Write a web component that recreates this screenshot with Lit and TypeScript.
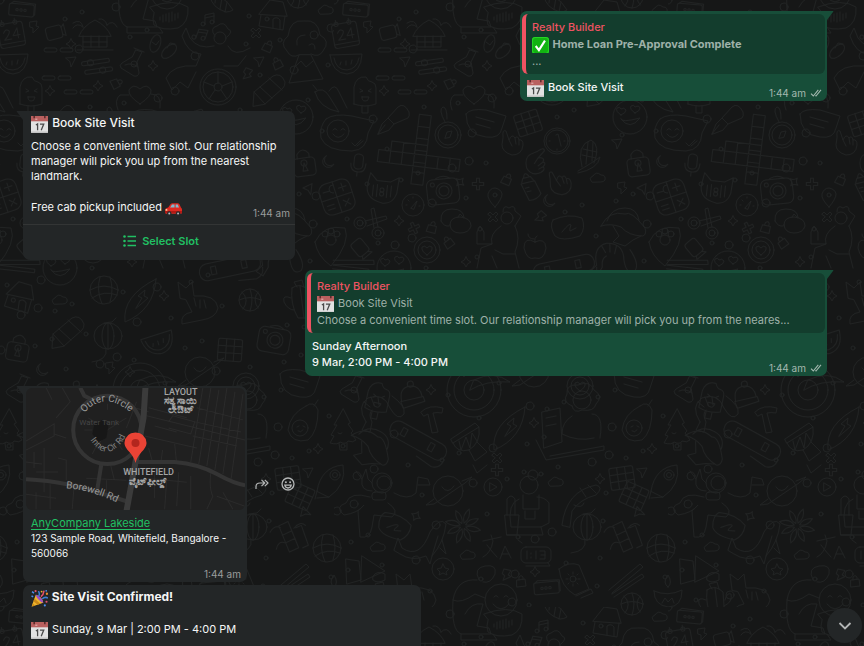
import { LitElement, html, svg, css } from "lit";
import { customElement, property } from "lit/decorators.js";

/* ---------- wallpaper doodles: each is drawn around its own origin ---------- */
const doodles: Record<string, unknown> = {
  star: svg`<path d="M0-5Q1-1 5 0Q1 1 0 5Q-1 1-5 0Q-1-1 0-5Z"/>`,
  cross: svg`<path d="M-5-3-3-5 0-2 3-5 5-3 2 0 5 3 3 5 0 2-3 5-5 3-2 0Z"/>`,
  pills: svg`<rect x="-14" y="-2" width="13" height="4" rx="2"/><rect x="2" y="-2" width="13" height="4" rx="2"/>`,
  plane: svg`<path d="M-5-4 5-5 0 5-1 0Z"/>`,
  bolt: svg`<path d="M-4-5 3-6 2-1 5 0-1 6-1 1-4 0Z"/>`,
  bag: svg`<path d="M-4-1 4-2 5 5-4 6ZM-2-1V-4Q0-7 2-4V-2"/>`,
  moon: svg`<path d="M-2-6A6 6 0 1 0 6 2 5 5 0 0 1-2-6Z"/>`,
  cloud: svg`<path d="M-6 4Q-10 0-5-2-2-7 3-3 8-3 7 2 6 4 3 4Z"/>`,
  radio: svg`<rect x="-12" y="-6" width="25" height="12" rx="2"/><circle cx="-4" r="1.2"/><circle r="1.2"/><circle cx="4" r="1.2"/><path d="M-10-6-8-8 14-7V4"/>`,
  calendar: svg`<rect x="-12" y="-12" width="25" height="24" rx="3"/><path d="M-7-12V-16M6-12V-16M-12 8H13"/><circle cx="-7" cy="-12" r="2"/><circle cx="6" cy="-12" r="2"/><path d="M-7-3Q-4-8-1-4-1-1-7 4H0M7 4V-6L2 1H9"/>`,
  camcorder: svg`<rect x="-9" y="-6" width="16" height="13" rx="3"/><path d="M7-3 10-6V6L7 4"/>`,
  hut: svg`<path d="M-16 0Q-12-10 0-16 12-10 16 0ZM-12 0V11H12V0M-12 6H12M-4 0V11M4 0V11M-18 14H18M12-11Q18-17 22-9M12-11Q10-18 4-17M-12-9Q-18-14-22-8M-12-9Q-14-18-22-13"/>`,
  melon: svg`<path d="M-16-7 16-8Q15 11 1 12-14 11-16-7ZM-12-4Q-10 8 1 8 11 7 13-4M-5 0-6 3M0-1V3M6-2 5 2"/>`,
  sandals: svg`<ellipse cx="-8" rx="5" ry="9" transform="rotate(18)"/><ellipse cx="8" cy="-1" rx="5" ry="9" transform="rotate(48)"/><path d="M-11-4-7-1-4-5M4 2 7-3 12-2"/>`,
  flask: svg`<path d="M2-12 8-10 3 0 5 11Q4 15 0 14L-13 6Q-15 3-12 1L-2-5ZM0-14 10-10M-9 3Q-2 0 4 5"/><circle cx="0" cy="2" r="3"/>`,
  brush: svg`<rect x="-14" y="-6" width="28" height="4" rx="2"/><rect x="-12" y="3" width="28" height="4" rx="2"/><circle cx="-5" cy="-4" r="3"/><circle cx="6" cy="5" r="3"/>`,
  popsicle: svg`<path d="M-11 12V-5Q-9-16 1-15 3-10 7-10 11-9 11-4V12Q0 16-11 12ZM-3 14V21H3V14M-5-3-2-1-5 0M6-3 3-1 6 0M-3 5H4Q3 10 0 9-3 9-3 5Z"/>`,
  heartChat: svg`<path d="M0 8Q-12 0-11-6-7-13 0-7 7-13 11-6 12 0 0 8ZM-11-1H-20Q-26 4-22 14M11-2Q22-2 20 12"/>`,
  wheel: svg`<circle r="18"/><circle r="15"/><circle r="4"/><path d="M0-4V-15M4-1 14-5M3 3 9 12M-3 3-9 12M-4-1-14-5"/>`,
  rider: svg`<circle cx="2" cy="-24" r="6"/><path d="M-3-26Q-9-34-1-36 6-42 10-33 16-31 9-25M-4-16Q-20-12-28-24L-32-34-36-26Q-30-8-17-8L-22 4Q-45 2-52 16L-46 28-38 20-30 26-22 10M10-16Q16-4 32-14M6 4 20 4 28-6"/>`,
  waveChat: svg`<path d="M-20-10Q4-19 18-10 19 6 8 11-8 14-16 8-18 2-16-4ZM-10 0V3M-7-2V5M-4-3V4M-1-4V5M2-5V4M5-3V3M8-4V1"/>`,
  music: svg`<path d="M-3 4V-5L6-7V2M-3-2 6-4"/><circle cx="-5" cy="4" r="2"/><circle cx="4" cy="2" r="2"/>`,
  shell: svg`<path d="M-12-8Q0-12 11 6 8 8 4 8-10 4-12-8ZM-6-9-7-1M0-6-2 5M5-2 3 8"/>`,
  house: svg`<path d="M-14 0-3-14 10-12 14 2ZM-12 1-14 12 10 16 12 2M0 14V5Q4 2 7 6V15"/><circle cx="-6" cy="5" r="2"/>`,
  ball: svg`<circle r="11"/><path d="M-11 0Q0-5 11 0M0-11Q4 0 0 11M-8-8Q0 0-7 9M8-8Q2 0 8 8"/>`,
  volcano: svg`<path d="M-6 2Q-14 6-18-2-26-10-17-17-15-34-1-32 13-34 15-18 26-12 18-2 14 5 6 1M-6 2-16 30 18 26 6 2ZM-10 14-4 8 1 14 8 8M-8-8Q-10-18 0-18M4-8Q10-12 10-4"/>`,
  pencil: svg`<path d="M-16 16-15 2 4-14Q12-18 16-8 16-4 14-2L-4 14ZM-15 2-4 14M-9-3 3 8M0-12 13 0"/>`,
  pepper: svg`<path d="M-12-6Q-4-12 2-2L12 14Q-8 10-12-6ZM-10-8-14-13M2-7Q8-16 12-6L20 10"/>`,
  smileChat: svg`<path d="M-20-14Q-12-20 6-17L28-12 22 0Q21 17 6 18-20 18-25 5-27-6-20-14Z"/><circle cx="-8" cy="-2" r="11"/><path d="M-13-3Q-11-6-9-3M-5-3Q-3-6-1-3M-13 1Q-8 8-2 1M6 10 9 13 15 7M11 13 17 8"/>`,
  lock: svg`<rect x="-11" y="-5" width="22" height="18" rx="4"/><path d="M-6-5V-9Q0-17 6-9V-5M0 0-2 8H3Z"/><circle r="3"/>`,
  pen: svg`<path d="M-16 14-12 4-6-2 0 4-5 10ZM-6-2 4-13Q10-18 15-8 16-4 14-2L0 4M-16 14-9 5"/>`,
  crossword: svg`<path d="M0-36H12V34H0ZM0-24H12M0-12H12M0 0H12M0 12H12M0 22H12M-36 4H46V16H-36ZM-24-6H12M-24-6V16M-12-6V16M24 4V16M36 4V16"/>`,
  compass: svg`<circle r="13"/><circle r="10"/><path d="M-3 3-1-3 4-4 2 2ZM-3-13Q-10-26-5-28-1-28-1-16"/>`,
  chat: svg`<path d="M-20-10Q-16-16 0-14L20-8 16 4Q14 15 0 13-20 11-20-10ZM-10-7 8-2M-10 0 4 4"/>`,
  gift: svg`<rect x="-12" y="-11" width="24" height="22" rx="2"/><path d="M-12-4H12M-12 3H12M-4-11V11M4-11V11"/>`,
  hand: svg`<path d="M-9-6Q-10-14-6-12L-3-3Q0-10 3-5 6-8 7-3 11-4 11 2 10 12 0 12-10 9-10 2ZM-3-3 0 3M3-5 4 1M7-3V2"/>`,
  clock: svg`<circle r="13"/><circle r="11"/><path d="M-1-6 1-7 4 5M-8 0H-7M7 0H8M0 8V9"/>`,
  calc: svg`<rect x="-16" y="-16" width="32" height="32" rx="8"/><path d="M0-16V16M-16 0H16M-12-8H-5M4-8H12M8-12V-4M5 5 11 11M11 5 5 11M-12 6H-5M-12 10H-5"/>`,
  mic: svg`<rect x="-4" y="-9" width="9" height="15" rx="4"/><path d="M-7 1Q-7 9 1 9 8 9 8 0M0 9V13"/>`,
  cat: svg`<path d="M-15-4-13-16-6-9H8L16-14 15 2Q12 13 2 13-16 11-15-4ZM-9-4V7M-5-5V7M5-5V7M9-5V6"/><circle cx="0" cy="0" r="2"/><circle cx="0" cy="4" r="2"/>`,
  gauge: svg`<circle r="11"/><path d="M-2 3 4-4 1 4ZM-7 0H-6M6 1H7M0-7V-8M-5-5 -4-4"/>`,
  camera: svg`<rect x="-16" y="-12" width="32" height="25" rx="6"/><circle r="8" cx="1"/><circle r="5" cx="1"/><circle cx="-10" cy="-7" r="2"/><path d="M-6-13Q2-17 8-12"/>`,
  bottle: svg`<path d="M-8-5H6L9 9Q5 14-4 13ZM-7-6-5-10H3L5-6M-4-10Q-2-18 2-10M-5 0H-1M-4 4H0"/>`,
  pin: svg`<path d="M0 10Q-8 2-7-3-5-9 0-9 6-8 7-3 7 2 0 10Z"/><circle cy="-2" r="2"/>`,
  scissors: svg`<circle cx="-10" cy="0" r="6"/><circle cx="8" cy="10" r="6"/><circle cx="-10" r="3"/><circle cx="8" cy="10" r="3"/><path d="M-5-2 16-7 17-4-3 3M4 5 1-14 4-15 8 4"/>`,
  mushroom: svg`<path d="M-24 4Q-16-12 0-8 6-12 20 6 22 12 18 14 4 14-4 5-14 1-24 4ZM-12 4-6 14-12 20 0 24 8 18 16 14M-18-1Q-14-14 0-14 12-14 14-2"/>`,
  pick: svg`<path d="M-16-4Q-8-22 14-18 20-4 0 20-14 10-16-4Z"/><circle r="5" cy="-6"/><circle r="3" cx="-6" cy="-12"/><circle r="3" cy="-15"/><circle r="3" cx="6" cy="-12"/>`,
  heartRing: svg`<circle r="13"/><circle r="9"/><path d="M0 5Q-6 1-5-3-2-5 0-2 2-5 5-3 6 1 0 5Z"/>`,
  dumpling: svg`<path d="M-15 0Q-16-12-4-12 8-12 8-3M-15 0Q-12 6-7 5M-6 4Q-6-4 4-4 15-3 15 5 13 12 4 12-5 12-6 4ZM2-4 4-7 7-4"/>`,
  walker: svg`<circle cx="0" cy="-26" r="6"/><path d="M-4-32Q-4-40 2-36 8-40 8-33L14-28 8-18M-6-18Q-18-10-15 0H-30V-12L-27-18-23-12V-4M8-18Q14-6 8 8L12 24M-12 6-4 10H8M-15 0-26 4-30 24M-15 12-10 24"/>`,
  apple: svg`<path d="M0-6Q-11-12-11 0-8 13 0 10 9 13 11 0 10-11 0-6ZM0-6Q-1-10 2-12M-1-9Q-7-9-7-14"/>`,
  scribble: svg`<path d="M-15-8Q0-15 14-10 18 0 12 8-6 14-13 8-19-2-15-8ZM-6 4Q2-6 3-3 1 2 2 3L8 0"/>`,
  loveFace: svg`<circle r="17"/><path d="M-9 2Q0 14 10 1-9 6-9 2M-9-2Q-15-6-13-9-10-11-9-8-6-10-4-7-4-4-9-2ZM5-4Q-1-8 1-11 4-13 5-10 9-12 10-9 10-6 5-4Z"/>`,
  corn: svg`<path d="M-6 12Q-12-10 3-15 13-10 6 8M-10 16Q4 8 12 2 10 14-10 18M-5-6 9-3M-6 0 8 3M0-13-2 9M5-13 4 6"/>`,
  tree: svg`<path d="M0-20-9-4H-6L-12 6-9 7-13 14Q-5 16-3 13 3 16 5 12 10 14 13 11L8 4 10 2 5-5 7-6ZM-4 14-3 21H4V14M-5 4Q-3 6-1 4"/>`,
  shrimp: svg`<path d="M-12 12Q-22-4-10-12 6-18 12-2 20 12 26 4 28-4 14-14M-12 12-16 20-8 22-6 12Q-10 4-6 0M-14-8-8-3M-7-13-4-5M0-13 1-5"/>`,
  beanie: svg`<path d="M-11 4Q-12-10-1-10 9-10 10 2M-12 4 11 2 12 7-10 11Z"/><circle cy="-12" r="3"/>`,
  plate: svg`<circle r="27"/><circle r="20"/><circle r="10"/><path d="M-4 0Q12-10 36-8 20-20 0-10Z"/>`,
  hammer: svg`<path d="M-14-4Q-6-12 8-8L7-3Q2-4-2-3L3 16-3 17-7-2-11 0Z"/>`,
  skate: svg`<rect x="-31" y="-9" width="62" height="17" rx="8"/><rect x="-19" y="-5" width="5" height="8"/><rect x="12" y="-5" width="5" height="8"/><path d="M6 14 24 16Q32 14 32 6"/>`,
  drum: svg`<path d="M-16 0 8-16 12-12-14 4ZM-14 4Q-10 14 2 11 14 4 12-12M-8 2-6 11-1-2 3 9 5-6 10 2M2 11 8 22 20 13 10 3M6 26 10 34 20 26"/>`,
  surf: svg`<path d="M16-21Q-18-4-15 22 14 10 16-21ZM-4 8 2-2-2-4 5-10 4-4 8-2 0 5Z"/>`,
  laptopGirl: svg`<circle cx="8" cy="-28" r="9"/><path d="M-2-22Q-12-26-7-34-8-44 4-43 16-48 20-38 30-32 22-24 20-16 8-18 0-14-2-22ZM-2-12Q-12-6-12 6 4 14 20 10M18-14Q30-14 26 10M-32-16-14-20-12 14-30 20ZM-38 12-28 32 30 22V18L-24 28M-28-10-18-12M-28-2-18-4"/>`,
  rocket: svg`<path d="M-14 10Q-10-14 12-16 16 4-2 16ZM-14 10-16 18M-2 16-14 17"/><circle r="5" cx="4" cy="-6"/><circle r="2.5" cx="4" cy="-6"/>`,
  astronaut: svg`<circle cx="2" cy="-24" r="10"/><circle cx="4" cy="-24" r="7"/><path d="M-8-16Q-20-16-18-28L-24-36M-18-28-14-38-12-28-8-24M14-14Q28-6 36-14L38-30 48-28 50-22 38-22M-10-10Q-30-16-34-4-46 0-36 8-22 6-16-2L-22 4-20 30Q-10 32-8 20L-6 8 12 10Q20 4 8-4"/><rect x="-8" y="-15" width="14" height="8" rx="3"/>`,
  planet: svg`<circle r="15"/><path d="M-14 8-22 14-14 13 17-8 24-14 14-10M-6-4Q0 4 6-5"/>`,
  play: svg`<circle r="9"/><path d="M-3-4 4 0-3 4Z"/>`,
  gardener: svg`<circle cy="-22" r="9"/><circle cx="4" cy="-32" r="5"/><path d="M-10-8Q-22-4-18 20H12L20 16V-4Q16-10 8-10M-6-12V2H10V-12M-4 4V12H6V4M-24 8H-10L-12 28H-22ZM-22 8V-8Q-18-14-14-8V8M-22 28H14L12 20"/>`,
  koi: svg`<path d="M-18 24Q-14-10 16-16 24-14 16-6 0-2-8 10L-10 26ZM0-13 6-4M8-16 16-8M-6 4Q2 8 4 2"/>`,
  lantern: svg`<ellipse rx="14" ry="13"/><ellipse rx="6" ry="13"/><path d="M-4-13 4-14 8-18M0-13V13M-2 13Q0 24-16 26"/>`,
  globe: svg`<circle r="14"/><path d="M-14 0Q0-8 14 0M-12 8Q0 0 13 5M-4-13Q-8 0-2 14M6-13Q10 0 6 12"/>`,
  flower: svg`<path d="M0-3Q-5-10 0-18 5-10 0-3ZM3 0Q10-5 18-2 10 5 3 0ZM0 3Q5 10 0 18-5 10 0 3ZM-3 0Q-10 5-18 2-10-5-3 0ZM2-2Q3-10 12-12 10-3 2-2ZM2 2Q10 3 12 12 3 10 2 2ZM-2 2Q-3 10-12 12-10 3-2 2ZM-2-2Q-10-3-12-12-3-10-2-2Z"/>`,
  whale: svg`<path d="M-26 6-22-6-18 4Q0 16 10-12 20-28 26-20 24-2 12 12L10 20 6 12Q-8 18-20 10ZM18-8 12 12M20 4 26 10 22-4"/>`,
  sandwich: svg`<path d="M-19-9-6-7-4 12-18 16ZM-3-12 20 3-4 14ZM8 8Q12 2 20 6V12Q12 16 8 12Z"/>`,
  starRing: svg`<circle r="11"/><path d="M0-5 2-1 6 0 3 3 4 6 0 4-4 6-3 3-6 0-2-1Z"/>`,
  letters: svg`<path d="M-14-8 4-12M-6-14-4-8Q-6 4-14 8M-10-4Q-4 4 0 8M3 10 8-3 14 9M5 5H12"/>`,
  alarm: svg`<rect x="-15" y="-8" width="30" height="16" rx="5"/><path d="M-9-4V4M-5-2V-1M-5 2V3M0-4V4M4-4H9V4H4M5 0H9M-14-12-18-15M12 8 14 11H-10"/>`,
  sunscreen: svg`<path d="M-14-10Q-4-18 6-14L16 10 2 16Q-12 8-14-10ZM3 17 18 10 20 14 8 19"/><circle r="3"/><path d="M0-5V-7M0 5V7M-5 0H-7M5 0H7M-4-4-5-5M4-4 5-5M-4 4-5 5M4 4 5 5"/>`,
  avocado: svg`<path d="M4-18Q12-24 16-14 16 8 6 16-10 20-14 6-12-10 4-18Z"/><circle cx="-2" cy="4" r="8"/><path d="M-5 3-3 2M1 2 3 3M-4 7Q-1 9 1 6M12-18 16-24"/>`,
  fox: svg`<path d="M-16-4-18-20-10-14-4-20-2-6Q20-8 22 6 20 16 6 18L-14 22Q-16 12-4 10L-10-2ZM-2-4 0 4M4-2 4 6M8-2 10 6"/>`,
  cactus: svg`<path d="M-8-12Q0-18 8-10L10 18H-2Q-10 4-8-12ZM-9-2Q-18-6-16 2-12 10-6 10M9 4Q18 0 16-8 12-10 10-2M0-14 4 18M-3-13-6-18 2-20 4-13"/>`,
  lamp: svg`<path d="M-14-2Q0 4 14-3 14 14 0 14-14 12-14-2ZM0-6Q-6-10 0-18 5-10 0-6ZM-6 10 -3 5 0 9 4 5 6 10"/>`,
  squat: svg`<circle r="16" cx="10" cy="0"/><path d="M3-3Q5-6 7-3M13-3Q15-6 17-3M2 4Q10 14 18 4M-12-20Q-18-32-6-34 6-36 4-26 0-16-8-18M-14-20Q-34-22-38 0-30 4-16-6L-6-2M-38 0Q-40 30-30 34H0L-2 28-14 26-8 4Q-20 2-26 14M-30 34V40H6L2 34"/>`,
  sticks: svg`<path d="M-17 12 14-14 17-11-14 15M-14 16 16-4 18-1-12 19"/>`,
  bamboo: svg`<path d="M-6-14 4-16 8 12-2 14ZM-5-4 5-6M-3 4 7 2M10-8 16-9 18 12 12 13M-16-10Q-10-16-5-12M-14 8Q-10 0-4 4M8-8Q16-14 20-8"/>`,
};

/* name, x, y, rotation inside the 334 x 607 repeat */
const placed: Array<[string, number, number, number]> = [
  ["radio", 21, 10, 5], ["calendar", 11, 35, -10], ["bolt", 34, 27, 0], ["camcorder", 55, 32, -14], ["hut", 95, 36, 0],
  ["star", 71, 44, 0], ["pills", 58, 50, 0], ["plane", 71, 62, 0], ["melon", 12, 62, 0], ["sandals", 163, 46, 0],
  ["flask", 134, 62, 0], ["brush", 96, 66, -8], ["star", 153, 66, 0], ["popsicle", 31, 92, 0], ["star", 50, 91, 0],
  ["star", 98, 86, 0], ["pills", 56, 78, 0], ["pills", 78, 92, 0], ["heartChat", 140, 96, 0], ["wheel", 218, 87, 0],
  ["rider", 218, 62, 0], ["waveChat", 170, 17, 0], ["music", 208, 20, 0], ["music", 200, 35, 20], ["shell", 222, 4, 0],
  ["bag", 117, 83, 70], ["bolt", 247, 74, 30], ["cross", 256, 33, 0], ["bag", 268, 46, 30], ["house", 273, 14, 0],
  ["ball", 298, -3, 0], ["ball", 298, 604, 0], ["cloud", 326, 10, 0], ["volcano", 305, 53, 0], ["plane", 259, 62, 0],
  ["bag", 277, 63, -20], ["pencil", 269, 90, 0], ["pepper", 327, 98, 0], ["loveFace", 296, 117, 0], ["smileChat", 12, 133, 0],
  ["lock", 304, 163, -8], ["moon", 328, 162, 0], ["mic", 24, 163, 6], ["pen", 60, 120, 0], ["crossword", 81, 150, 7],
  ["compass", 114, 135, 0], ["chat", 152, 124, 0], ["gift", 194, 123, -18], ["hand", 178, 143, 0], ["clock", 223, 141, 0],
  ["hand", 203, 162, 60], ["hand", 226, 183, -10], ["calc", 3, 197, -18], ["cat", 48, 190, 6], ["gauge", 79, 205, 0],
  ["camera", 109, 191, -6], ["star", 126, 182, 40], ["cross", 144, 184, 45], ["bag", 173, 179, 30], ["bottle", 196, 187, -14],
  ["pin", 161, 197, 0], ["moon", 215, 201, 0], ["corn", 254, 155, 0], ["plane", 283, 144, 0], ["cloud", 264, 178, 0],
  ["bolt", 288, 188, 0], ["plane", 309, 190, -20], ["scissors", 36, 223, 0], ["mushroom", 291, 222, 0], ["star", 65, 221, 0],
  ["cross", 80, 228, 20], ["bag", 98, 227, 20], ["dumpling", 122, 221, 0], ["cross", 159, 217, 0], ["bag", 114, 242, -30],
  ["pick", 331, 246, 0], ["heartRing", 93, 250, 0], ["star", 132, 262, 0], ["walker", 173, 244, 0], ["apple", 201, 248, 0],
  ["scribble", 234, 228, 0], ["bolt", 206, 217, 50], ["shrimp", 278, 258, 20], ["sticks", 20, 262, 40], ["camcorder", 27, 248, 50],
  ["loveFace", 60, 268, 0], ["skate", 230, 268, -12], ["house", 20, 296, 8], ["globe", 104, 290, 0], ["surf", 140, 300, 0],
  ["fox", 196, 302, 0], ["ball", 250, 300, 0], ["cactus", 300, 300, 0], ["cloud", 60, 300, 0], ["star", 164, 296, 0],
  ["pencil", 68, 332, 0], ["lantern", 108, 336, 0], ["melon", 158, 342, -16], ["gift", 230, 350, 4], ["camera", 274, 340, 10],
  ["bottle", 318, 346, 0], ["lock", 18, 348, 10], ["moon", 42, 370, 0], ["planet", 200, 372, 0], ["heartRing", 246, 386, 0],
  ["chat", 300, 384, 0], ["popsicle", 44, 398, 12], ["flask", 20, 388, 0], ["bolt", 110, 368, 0], ["star", 130, 372, 0],
  ["beanie", 78, 396, -8], ["plate", 140, 390, 0], ["star", 97, 390, 0], ["tree", 9, 429, 0], ["shrimp", 44, 410, 0],
  ["hammer", 101, 416, 0], ["mushroom", 40, 444, 30], ["skate", 84, 441, 29], ["drum", 133, 439, 0], ["surf", 175, 428, 0],
  ["laptopGirl", 240, 428, 0], ["avocado", 302, 424, 0], ["cross", 163, 458, 0], ["cross", 163, 470, 45], ["star", 200, 423, 0],
  ["star", 318, 449, 0], ["plane", 308, 473, 0], ["rocket", 331, 481, 0], ["astronaut", 46, 507, 0], ["planet", 114, 491, 0],
  ["play", 159, 487, 0], ["gardener", 195, 507, 0], ["cloud", 222, 482, 0], ["star", 266, 479, 0], ["koi", 246, 501, 0],
  ["lantern", 253, 527, 0], ["bamboo", 288, 538, -14], ["globe", 327, 548, 0], ["flower", 129, 526, 20], ["whale", 86, 544, 0],
  ["cloud", 44, 547, 0], ["cloud", 134, 555, 0], ["scribble", 60, 527, 30], ["star", 82, 516, 30], ["sandwich", 31, 568, 0],
  ["starRing", 109, 569, 0], ["letters", 163, 549, 0], ["alarm", 202, 555, 0], ["sunscreen", 239, 579, 0], ["star", 201, 572, 0],
  ["sticks", 292, 578, 0], ["fox", 80, 594, 0], ["cactus", 47, 602, 0], ["lamp", 334, 593, 0],
  ["squat", 157, 600, 0], ["squat", 157, -7, 0], ["radio", 212, 588, -5], ["bag", 187, 581, 0], ["bolt", 172, 575, 20],
  ["gift", 288, 478, -8], ["gift", 300, 496, 24], ["plane", 306, 513, -70],
];

/* small circles scattered between the doodles */
const small = ["star", "bag", "bolt", "plane", "cross", "cloud"];
const specks = Array.from({ length: 260 }, (_, i) => ({
  x: (i * 131 + (i % 7) * 19) % 334,
  y: Math.round((i * 607) / 260),
  r: i % 3 === 0 ? 4 : 2,
})).filter((s) => placed.every(([n, x, y]) => Math.hypot(x - s.x, y - s.y) > (small.includes(n) ? 9 : 16)));

@customElement("chat-wallpaper")
export class ChatWallpaper extends LitElement {
  static styles = css`
    :host { display: block; }
    svg { display: block; width: 100%; height: 100%; }
    .lines { fill: none; stroke: #212323; stroke-width: 1; stroke-linejoin: round; stroke-linecap: round; }
  `;
  render() {
    return html`<svg aria-hidden="true">
      <defs><pattern id="doodles" width="334" height="607" patternUnits="userSpaceOnUse">
        <g class="lines">
          ${placed.map(([n, x, y, r]) => [-334, 0, 334]
            .filter((dx) => x + dx > -50 && x + dx < 384)
            .map((dx) => svg`<g transform="translate(${x + dx} ${y}) rotate(${r})">${doodles[n]}</g>`))}
          ${specks.map((s) => svg`<circle cx=${s.x} cy=${s.y} r=${s.r}/>`)}
        </g>
      </pattern></defs>
      <rect width="100%" height="100%" fill="url(#doodles)"/>
    </svg>`;
  }
}

/* ---------- inline emoji ---------- */
const calendarEmoji = svg`
  <path d="M1 1H17V16Q17 17 16 17H2Q1 17 1 16Z" fill="#e2e2e2"/>
  <path d="M1 1H17V6H1Z" fill="#b9605f"/>
  <path d="M1 15.500H17V16Q17 17 16 17H2Q1 17 1 16Z" fill="#c4c4c4"/>
  <path d="M4 1V3M14 1V3" stroke="#5c2b2b" stroke-width="1.500"/>
  <path d="M5 4H7" stroke="#e6b6b4" stroke-width="1"/>
  <path d="M5.600 9.500 7.200 8.400V14.400M9.400 8.600H13L10.600 14.400" fill="none" stroke="#4a4a4a" stroke-width="1.200"/>`;
const checkEmoji = svg`
  <rect x="1" y="1" width="16" height="16" rx="3" fill="#12b312"/>
  <rect x="1.500" y="1.500" width="15" height="15" rx="2.500" fill="none" stroke="#25d425"/>
  <path d="M4.500 9.500 7.500 13.300 13.200 4.400" fill="none" stroke="#fff" stroke-width="2"/>`;
const carEmoji = svg`
  <path d="M1 11Q1 8.500 4 8L6.500 4.600Q7 4 8 4H13Q14 4 14.600 5L16 8Q17.500 9 17 13Q17 14 16 14H2.500Q1 14 1 12.500Z" fill="#df2a22"/>
  <path d="M5.800 8 7.600 5.300H10V8ZM11 5.300H13L14.200 8H11Z" fill="#7fb9cf"/>
  <path d="M1 11.500H17V13H1Z" fill="#a81712"/>
  <circle cx="5" cy="13.700" r="2.100" fill="#2a2a2c"/><circle cx="13.300" cy="13.700" r="2.100" fill="#2a2a2c"/>
  <circle cx="5" cy="13.700" r="0.900" fill="#b8bcc0"/><circle cx="13.300" cy="13.700" r="0.900" fill="#b8bcc0"/>
  <circle cx="2.400" cy="10.300" r="0.900" fill="#f7d9a0"/>`;
const partyEmoji = svg`
  <path d="M1.500 16.800 5.500 5.500Q8 6 10.400 8.400 12.400 10.800 12.500 13Z" fill="#eeb52d"/>
  <path d="M4.200 9 9.800 14 7.300 14.900 3.300 11.600ZM2.600 13.600 4.900 15.700 3 16.300 2 15.400Z" fill="#c98716"/>
  <path d="M5.500 5.500Q7 5 10 8.200 12.800 11.400 12.500 13 10 12.500 7.800 9.800 5.600 7.300 5.500 5.500Z" fill="#9b4cc6"/>
  <path d="M8 7Q9.800 5 8 2M11.500 9.500Q14 7 17 8.500" fill="none" stroke="#3e7fd8" stroke-width="1.400"/>
  <path d="M10.300 7.300Q12.800 5.400 13.300 1.500" fill="none" stroke="#e4506c" stroke-width="1.400"/>
  <path d="M2 2.500 3.800 4M1.500 6.500 3 7.500" stroke="#4a8df0" stroke-width="1.400"/>
  <circle cx="5.300" cy="2" r="1" fill="#e4506c"/><circle cx="11" cy="2.500" r="0.900" fill="#eeb52d"/>
  <circle cx="16" cy="4.500" r="1.100" fill="#e58a2b"/><circle cx="15.600" cy="12" r="1" fill="#e4506c"/><circle cx="14" cy="15.500" r="1" fill="#4a8df0"/>
  <circle cx="15.300" cy="1.800" r="0.800" fill="#4a8df0"/>`;
const emojis: Record<string, [string, unknown]> = {
  calendar: ["Calendar, 17", calendarEmoji],
  check: ["Check mark", checkEmoji],
  car: ["Car", carEmoji],
  party: ["Party popper", partyEmoji],
};
const emoji = (name: string) =>
  html`<svg class="emoji" viewBox="1 1 16 16" role="img" aria-label=${emojis[name][0]}>${emojis[name][1]}</svg>`;

const ticks = html`<svg class="ticks" viewBox="0 0 12 10" aria-hidden="true">
  <path d="M1 5.600 3.300 8 8.300 1.800M5.400 7.400 6 8 11 1.800" fill="none" stroke="currentColor" stroke-width="1.100"/></svg>`;

/* ---------- street map ---------- */
@customElement("location-map")
export class LocationMap extends LitElement {
  static styles = css`
    :host { display: block; overflow: hidden; border-radius: 6px; background: #202020; }
    svg { display: block; width: 100%; height: 100%; }
    text { font-family: Roboto, "Noto Sans", sans-serif; fill: #a5a5a5; }
    .street { font-size: 10px; fill: #9a9a9a; }
    .lane { font-size: 9px; fill: #808080; }
    .water { font-size: 8px; fill: #454545; }
    .area { font-size: 9px; font-weight: 500; text-anchor: middle; }
    .local { font-size: 10px; font-weight: 700; text-anchor: middle; }
    .minor { fill: none; stroke: #2b2b2b; stroke-width: 1; }
    .road { fill: none; stroke: #343434; stroke-width: 4; }
    .main { fill: none; stroke: #3b3b3b; stroke-width: 6; }
  `;
  render() {
    return html`<svg viewBox="0 0 218 122" preserveAspectRatio="xMidYMid slice" role="img" aria-label="Map of Whitefield">
      <defs>
        <path id="outer" d="M58 25Q79 1 108 28"/>
        <path id="inner" d="M64 52Q78 72 92 58Q102 50 100 34"/>
        <path id="borewell" d="M40 100Q68 102 100 119"/>
      </defs>
      <path class="minor" d="M0 53 28 36V48L0 62M28 46 40 50M18 60V104M10 84H32M8 64V80M0 106 30 110M24 96V121M32 70 40 72V92M48 96 46 121M10 104V121M0 74 16 76M36 0 44 14 30 30M20 0 26 12M120 28 218 52M122 20 160 30M128 38 150 44M118 48 170 60M142 34 146 28 168 34 164 46 142 40M176 0 164 74M184 0 172 76M192 2 180 78M200 0 188 82M208 4 196 86M216 6 204 92M170 20 216 32M168 34 214 44M166 48 210 58M122 60 126 74M136 62 134 76M148 56 150 76M120 90 160 94M128 84V110M140 92 138 121M152 84 150 118M164 88V121M184 84Q182 100 186 108L180 121M190 108 218 118M196 104 206 121M110 14 100 40M108 20 122 24M60 90 100 92M80 92V110M84 76 88 92"/>
      <path class="minor" d="M81 42 62 30M81 42 70 60M81 42 100 30M66 66 70 58M58 42H66M81 16V22M96 62 92 56"/>
      <path d="M68 36 76 32 82 38 80 50 72 54 66 46Z" fill="#171717"/>
      <path class="road" d="M54 0 58 8 66 12M75 76 71 101M0 91Q22 92 41 96T100 113"/>
      <circle class="road" cx="81" cy="42" r="34"/>
      <path class="road" d="M109 74H148Q172 76 190 86T218 97"/>
      <path class="main" d="M119-2 117 30 109 74 100 123"/>
      <text class="water" x="53" y="37">Water Tank</text>
      <text class="street"><textPath href="#outer">Outer Circle</textPath></text>
      <text class="lane"><textPath href="#inner">Inner Cir Rd</textPath></text>
      <text class="street"><textPath href="#borewell">Borewell Rd</textPath></text>
      <text class="area" x="154" y="7">LAYOUT</text>
      <text class="local" x="154" y="16">ಸತ್ಯ ಸಾಯಿ</text>
      <text class="local" x="154" y="25">ಲೇಔಟ್</text>
      <text class="area" x="122" y="87">WHITEFIELD</text>
      <text class="local" x="121" y="97">ವೈಟ್‌ಫೀಲ್ಡ್</text>
      <path d="M109 75Q108 70 103 64 98 59 98 55 99 45 109 44.500 119 45 120 55 120 59 115 64 110 70 109 75Z" fill="#ea4335"/>
      <circle cx="109" cy="55" r="4" fill="#b3261e"/>
    </svg>`;
  }
}

/* ---------- a speech bubble with an optional tail ---------- */
@customElement("chat-bubble")
export class ChatBubble extends LitElement {
  @property({ reflect: true }) side = "in";
  @property({ type: Boolean, reflect: true }) tail = false;
  static styles = css`
    :host { display: block; position: relative; box-sizing: border-box; border-radius: 7px; background: #232627; }
    :host([side="out"]) { background: #174e39; }
    :host([side="in"][tail]) { border-top-left-radius: 0; }
    :host([side="out"][tail]) { border-top-right-radius: 0; }
    .tail { position: absolute; top: 0; width: 7px; height: 9px; }
    :host([side="in"]) .tail { right: 100%; fill: #232627; }
    :host([side="out"]) .tail { left: 100%; fill: #174e39; }
  `;
  render() {
    const shape = this.side === "in" ? "M7 0H1Q0 0 1 1L7 9Z" : "M0 0H6Q7 0 6 1L0 9Z";
    return html`${this.tail ? html`<svg class="tail" viewBox="0 0 7 9" aria-hidden="true"><path d=${shape}/></svg>` : ""}<slot></slot>`;
  }
}

@customElement("app-root")
export class AppRoot extends LitElement {
  static styles = css`
    :host {
      display: block; position: relative; height: 100vh; overflow: hidden; background: #161717;
      font-family: Inter, "Noto Sans", sans-serif; font-size: 11px; line-height: 16px; color: #f5f6f6;
    }
    .wallpaper { position: absolute; inset: 0; }
    .thread { position: relative; display: flex; flex-direction: column; align-items: flex-start; gap: 10px; padding: 11px 37px 0 23px; }
    .sent { align-self: flex-end; max-width: 100%; }
    .short { width: 307px; }
    .long { width: 522px; }
    .offer { width: 272px; }
    .place { width: 224px; }
    .confirm { width: 398px; min-height: 140px; }
    p { margin: 0; }
    .emoji { width: 17px; height: 17px; margin: -2px 1px -2px 0; vertical-align: -4px; }
    .quote {
      margin: 0; box-sizing: border-box; height: 60px; padding: 5px 8px 4px 6px; border-left: 4px solid #ee5362;
      border-radius: 6px; background: #133d2d; color: #9fb1a9; line-height: 17px;
    }
    .quote p { white-space: nowrap; overflow: hidden; text-overflow: ellipsis; height: 17px; }
    .quote .name { color: #ee5362; font-weight: 500; }
    .sent-body { padding: 3px 2px 6px; }
    .row { display: flex; justify-content: space-between; align-items: flex-end; padding: 5px 3px 0 5px; }
    .time { display: flex; align-items: center; gap: 4px; height: 12px; font-size: 10px; line-height: 12px; color: #9a9c9c; white-space: nowrap; }
    .sent .time { color: #a3b8af; margin-bottom: -4px; }
    .ticks { width: 12px; height: 10px; }
    .strong { font-weight: 700; }
    .medium { font-weight: 500; }
    .title { font-size: 12px; }
    .offer-body { padding: 4px 5px 9px 8px; border-bottom: 1px solid #333535; }
    .copy { margin-top: 8px; line-height: 15px; }
    .foot { display: flex; justify-content: space-between; align-items: flex-end; margin-top: 16px; height: 15px; line-height: 15px; }
    .foot .time { margin-bottom: -4px; }
    .select {
      display: flex; align-items: center; justify-content: center; gap: 6px; width: 100%; height: 32px; margin-bottom: 3px; padding: 0 0 0 4px;
      border: 0; background: none; color: #21c063; font: inherit; font-weight: 600; cursor: pointer;
    }
    .select svg { width: 13px; height: 12px; }
    .located { display: flex; align-items: center; gap: 8px; }
    .place { padding: 2px 2px 1px 3px; }
    .map { height: 122px; }
    .address { padding: 6px 4px 0 5px; font-size: 10px; line-height: 15px; }
    .address a { display: block; color: #21c063; font-size: 11px; text-decoration: underline; text-underline-offset: 2px; }
    .address .time { justify-content: flex-end; margin-top: 6px; height: 14px; }
    .actions { display: flex; gap: 12px; }
    .icon { width: 14px; height: 14px; padding: 0; border: 0; background: none; color: #b4b6b6; cursor: pointer; }
    .icon svg { display: block; width: 14px; height: 14px; }
    .confirm { padding: 4px 8px 0; margin-top: -7px; }
    .confirm p + p { margin-top: 16px; }
    .jump {
      position: absolute; right: 2px; bottom: 3px; width: 35px; height: 35px; padding: 0; border: 0; border-radius: 50%;
      display: grid; place-items: center; background: #232627; color: #b4b6b6; cursor: pointer;
    }
    .jump svg { width: 14px; height: 8px; }
  `;

  private stamp(read = false) {
    return html`<span class="time">1:44 am ${read ? ticks : ""}</span>`;
  }

  render() {
    return html`
      <chat-wallpaper class="wallpaper"></chat-wallpaper>
      <main class="thread">
        <chat-bubble class="sent short" side="out" tail>
          <div class="sent-body">
            <blockquote class="quote">
              <p class="name">Realty Builder</p>
              <p class="strong">${emoji("check")} Home Loan Pre-Approval Complete</p>
              <p>...</p>
            </blockquote>
            <div class="row"><p class="medium">${emoji("calendar")} Book Site Visit</p>${this.stamp(true)}</div>
          </div>
        </chat-bubble>

        <chat-bubble class="offer" side="in" tail>
          <div class="offer-body">
            <p class="medium title">${emoji("calendar")} Book Site Visit</p>
            <p class="copy">Choose a convenient time slot. Our relationship manager will pick you up from the nearest landmark.</p>
            <div class="foot"><p>Free cab pickup included ${emoji("car")}</p>${this.stamp()}</div>
          </div>
          <button class="select" type="button">
            <svg viewBox="0 0 13 12" aria-hidden="true" fill="none" stroke="currentColor" stroke-width="1.500">
              <path d="M4.500 1.500H13M4.500 6H13M4.500 10.500H13"/>
              <g fill="currentColor" stroke="none"><circle cx="1.500" cy="1.500" r="1.300"/><circle cx="1.500" cy="6" r="1.300"/><circle cx="1.500" cy="10.500" r="1.300"/></g>
            </svg>
            Select Slot
          </button>
        </chat-bubble>

        <chat-bubble class="sent long" side="out" tail>
          <div class="sent-body">
            <blockquote class="quote">
              <p class="name">Realty Builder</p>
              <p>${emoji("calendar")} Book Site Visit</p>
              <p>Choose a convenient time slot. Our relationship manager will pick you up from the neares...</p>
            </blockquote>
            <div class="row"><p class="medium">Sunday Afternoon<br>9 Mar, 2:00 PM - 4:00 PM</p>${this.stamp(true)}</div>
          </div>
        </chat-bubble>

        <div class="located">
          <chat-bubble class="place" side="in" tail>
            <location-map class="map"></location-map>
            <div class="address">
              <a href="#lakeside">AnyCompany Lakeside</a>
              <p>123 Sample Road, Whitefield, Bangalore - 560066</p>
              ${this.stamp()}
            </div>
          </chat-bubble>
          <div class="actions">
            <button class="icon" type="button" aria-label="Forward">
              <svg viewBox="0 0 14 14" fill="none" stroke="currentColor" stroke-width="1.200" stroke-linejoin="round">
                <path d="M1 12V9.500Q1 6 5 6H9M6.500 2.800 9.700 6 6.500 9.200M9.800 2.800 13 6 9.800 9.200"/>
              </svg>
            </button>
            <button class="icon" type="button" aria-label="React">
              <svg viewBox="0 0 14 14" fill="none" stroke="currentColor" stroke-width="1.300">
                <circle cx="7" cy="7" r="6"/><path d="M3.800 8.200H10.200Q9.500 11 7 11 4.500 11 3.800 8.200Z"/>
                <g fill="currentColor" stroke="none"><circle cx="4.900" cy="5.300" r="1"/><circle cx="9.100" cy="5.300" r="1"/></g>
              </svg>
            </button>
          </div>
        </div>

        <chat-bubble class="confirm" side="in">
          <p class="strong title">${emoji("party")} Site Visit Confirmed!</p>
          <p>${emoji("calendar")} Sunday, 9 Mar | 2:00 PM - 4:00 PM</p>
        </chat-bubble>
      </main>
      <button class="jump" type="button" aria-label="Scroll to latest">
        <svg viewBox="0 0 14 8" fill="none" stroke="currentColor" stroke-width="1.800"><path d="M1.500 1 7 6.500 12.500 1"/></svg>
      </button>
    `;
  }
}
